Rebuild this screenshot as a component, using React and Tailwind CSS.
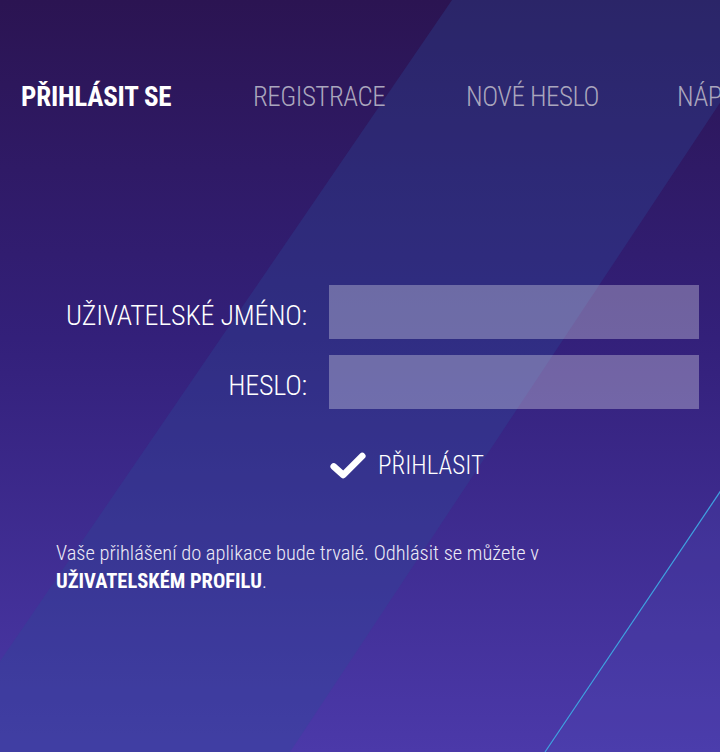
import React from 'react';

// --- Decorative background: gradient, diagonal light band, thin cyan line ---
const Backdrop = () => (
  <svg className="absolute inset-0 w-full h-full" viewBox="0 0 720 752" preserveAspectRatio="none">
    <defs>
      <linearGradient id="bg" x1="0" y1="0" x2="0" y2="1">
        <stop offset="0" stopColor="#2b1452" />
        <stop offset="0.45" stopColor="#33207a" />
        <stop offset="1" stopColor="#4b39a9" />
      </linearGradient>
    </defs>
    <rect width="720" height="752" fill="url(#bg)" />
    <polygon points="452,0 788,0 290,752 -62,752" fill="#2a4a98" opacity="0.32" />
    <polygon points="720,490 547,752 720,752" fill="#4f4fb8" opacity="0.22" />
    <line x1="724" y1="486" x2="545" y2="752" stroke="#3fa2e0" strokeWidth="1.2" />
  </svg>
);

const CheckIcon = () => (
  <svg viewBox="0 0 40 32" className="w-[38px] h-[31px]">
    <path d="M5 17 L15 26 L35 6" fill="none" stroke="white" strokeWidth="7" strokeLinecap="round" strokeLinejoin="round" />
  </svg>
);

const tabs = [
  { label: 'PŘIHLÁSIT SE', width: 'w-[232px]', active: true },
  { label: 'REGISTRACE', width: 'w-[213px]' },
  { label: 'NOVÉ HESLO', width: 'w-[211px]' },
  { label: 'NÁPOVĚDA', width: 'w-[211px]' },
];

export default function App() {
  return (
    <div
      className="relative w-[720px] h-[752px] overflow-hidden text-white"
      style={{ fontFamily: "'Roboto Condensed', 'Liberation Sans Narrow', Roboto, sans-serif" }}
    >
      <Backdrop />

      <div className="relative flex flex-col">
        {/* tabs */}
        <nav className="flex pl-[21px] pt-[80px] whitespace-nowrap">
          {tabs.map((t) => (
            <span
              key={t.label}
              className={
                t.active
                  ? `${t.width} shrink-0 text-[27px] leading-[34px] font-bold tracking-[-0.2px] text-white`
                  : `${t.width} shrink-0 text-[27px] leading-[34px] font-light tracking-[-0.5px] text-[#aaa6bd]`
              }
            >
              {t.label}
            </span>
          ))}
        </nav>

        {/* form */}
        <div className="mt-[171px] grid grid-cols-[307px_370px] gap-x-[22px] gap-y-[16px] items-center">
          <label className="pt-[8px] text-right text-[28px] leading-[34px] font-light tracking-[-0.2px]">UŽIVATELSKÉ JMÉNO:</label>
          <div className="h-[54px] bg-white/30" />
          <label className="pt-[8px] text-right text-[28px] leading-[34px] font-light tracking-[-0.2px]">HESLO:</label>
          <div className="h-[54px] bg-white/30" />
        </div>

        <button className="mt-[38px] ml-[329px] flex items-center gap-[11px] text-[25px] font-light">
          <CheckIcon />
          PŘIHLÁSIT
        </button>

        <p className="mt-[54px] px-[56px] text-[20.5px] leading-[28px] font-light text-[#eceaf6]">
          Vaše přihlášení do aplikace bude trvalé. Odhlásit se můžete v
          <br />
          <span className="font-bold text-white">UŽIVATELSKÉM PROFILU</span>.
        </p>
      </div>
    </div>
  );
}
